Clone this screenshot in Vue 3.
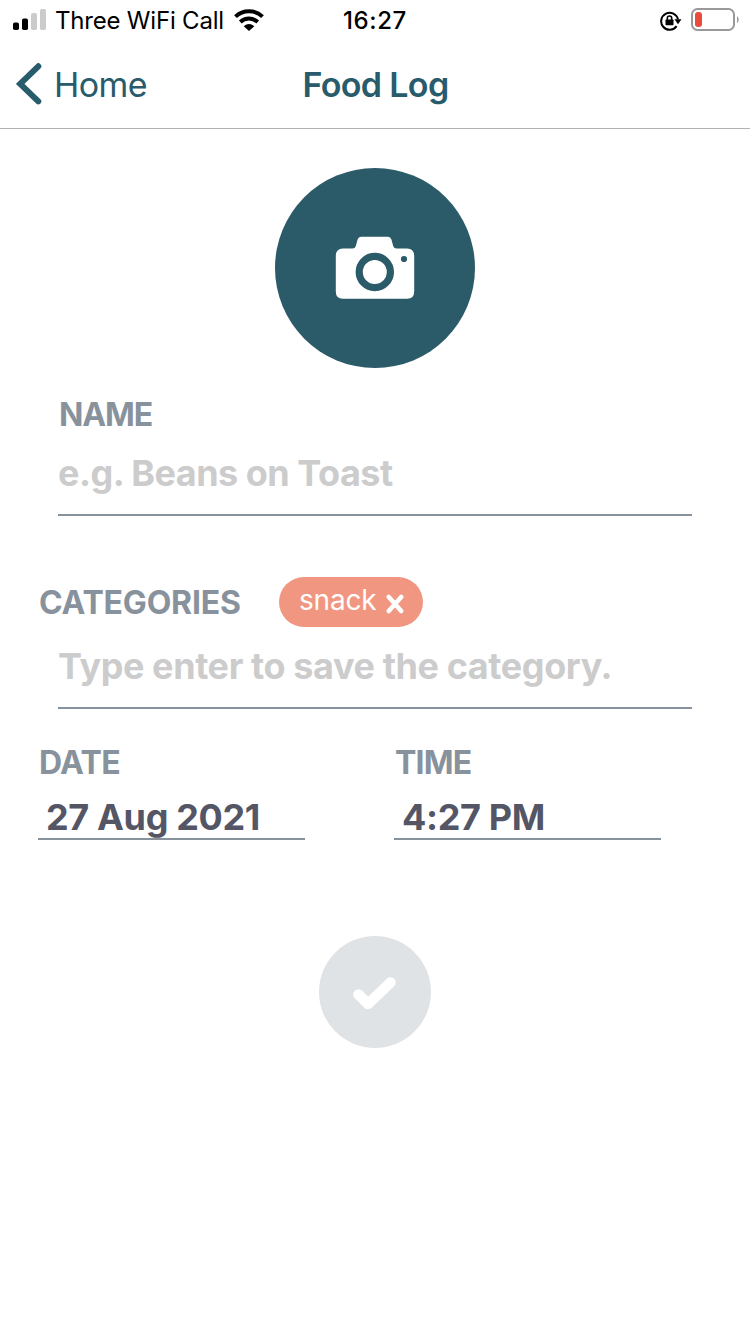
<script setup>
import { ref } from 'vue'

const name = ref('')
const category = ref('')
const categories = ref(['snack'])

function addCategory() {
  const value = category.value.trim()
  if (value) categories.value.push(value)
  category.value = ''
}
function removeCategory(index) {
  categories.value.splice(index, 1)
}
</script>

<template>
  <div class="screen">
    <div class="status">
      <div class="status-left">
        <svg class="signal" width="34" height="22" viewBox="0 0 34 22">
          <rect x="0" y="13.500" width="6" height="7.500" rx="1.800" fill="#000" />
          <rect x="9" y="9.500" width="6" height="11.500" rx="1.800" fill="#000" />
          <rect x="18" y="4" width="6" height="17" rx="1.800" fill="#cbcbcb" />
          <rect x="27" y="0" width="6" height="21" rx="1.800" fill="#cbcbcb" />
        </svg>
        <span class="carrier">Three WiFi Call</span>
        <svg class="wifi" width="30" height="22" viewBox="0 0 30 22">
          <g fill="none" stroke="#000" stroke-width="4">
            <path d="M1.500 7.600C9 .4 21 .4 28.500 7.600" />
            <path d="M6.300 13C11.300 8.400 18.700 8.400 23.700 13" />
          </g>
          <path d="M9.700 17.300Q15 12.800 20.300 17.300L15 22Z" fill="#000" />
        </svg>
      </div>
      <span class="clock">16:27</span>
      <div class="status-right">
        <svg width="22" height="20" viewBox="0 0 22 20">
          <path d="M16.600 15.200A8.500 8.500 0 1 1 18 8.500" fill="none" stroke="#000" stroke-width="2" />
          <path d="M14.500 8.300H21.500L18 13.200Z" fill="#000" />
          <rect x="5.500" y="8.600" width="8" height="5.700" rx=".7" fill="#000" />
          <path d="M7.300 9.500V7.200a2.200 2.200 0 0 1 4.400 0V9.500" fill="none" stroke="#000" stroke-width="1.600" />
        </svg>
        <svg width="48" height="24" viewBox="0 0 48 24">
          <rect x="1" y="1" width="42" height="21" rx="5.500" fill="none" stroke="#999" stroke-width="2" />
          <rect x="4" y="4" width="7" height="15" rx="3" fill="#e94b3c" />
          <path d="M46 8Q47.700 9 47.700 11.500T46 15Z" fill="#999" />
        </svg>
      </div>
    </div>

    <header class="nav">
      <a class="back">
        <svg width="26" height="42" viewBox="0 0 26 42">
          <path d="M22.300 3.300L4.200 20.800L22.300 38.300" fill="none" stroke="#285b6b" stroke-width="6" stroke-linecap="round" stroke-linejoin="miter" />
        </svg>
        <span class="back-text">Home</span>
      </a>
      <h1 class="title">Food Log</h1>
    </header>

    <main class="form">
      <button class="photo" aria-label="Add photo">
        <svg width="80" height="64" viewBox="0 0 80 64">
          <path d="M8 12.500H17.500Q20 12.500 20.800 10L22.600 3.500Q23.500.7 26 .7H53Q55.500.7 56.400 3.500L58.200 10Q59 12.500 61.500 12.500H72Q79.200 12.500 79.200 20V55.500Q79.200 62.800 72 62.800H8Q.800 62.800.800 55.500V20Q.800 12.500 8 12.500Z" fill="#fff" />
          <circle cx="39.800" cy="36" r="15.600" fill="#fff" stroke="#2b5a68" stroke-width="7.200" />
          <circle cx="69" cy="23" r="3.100" fill="#2b5a68" />
        </svg>
      </button>

      <label class="field name-field">
        <span class="label name-label">NAME</span>
        <input v-model="name" class="entry name-entry" placeholder="e.g. Beans on Toast" />
      </label>

      <div class="category-head">
        <span class="label cat-label">CATEGORIES</span>
        <span v-for="(item, i) in categories" :key="item" class="chip">
          <span class="chip-text">{{ item }}</span>
          <svg class="chip-x" width="18" height="20" viewBox="0 0 18 20" @click="removeCategory(i)">
            <path d="M2.800 3L15.200 17M15.200 3L2.800 17" stroke="#fff" stroke-width="4.500" stroke-linecap="round" />
          </svg>
        </span>
      </div>
      <div class="field">
        <input v-model="category" class="entry cat-entry" placeholder="Type enter to save the category." @keyup.enter="addCategory" />
      </div>

      <div class="when">
        <div class="when-item">
          <span class="label date-label">DATE</span>
          <div class="value date-value">27 Aug 2021</div>
        </div>
        <div class="when-item">
          <span class="label time-label">TIME</span>
          <div class="value time-value">4:27 PM</div>
        </div>
      </div>

      <button class="save" aria-label="Save">
        <svg width="44" height="36" viewBox="0 0 44 36">
          <path d="M5.500 20.500L15 30L37.500 8.500" fill="none" stroke="#fff" stroke-width="10.500" stroke-linecap="round" stroke-linejoin="round" />
        </svg>
      </button>
    </main>
  </div>
</template>

<style>
body {
  background: #fff;
}
</style>

<style scoped>
.screen {
  box-sizing: border-box;
  width: 750px;
  height: 1334px;
  overflow: hidden;
  background: #fff;
  font-family: Inter, "Liberation Sans", sans-serif;
  white-space: nowrap;
}
svg {
  display: block;
  flex: none;
}
button {
  display: flex;
  align-items: center;
  justify-content: center;
  padding: 0;
  border: 0;
  border-radius: 50%;
}
.status {
  display: grid;
  grid-template-columns: 1fr auto 1fr;
  height: 40px;
  color: #000;
  font-size: 24px;
  line-height: 41px;
}
.status-left {
  display: flex;
  padding-left: 13px;
}
.signal {
  margin-top: 9px;
}
.carrier {
  width: 179px;
  margin-left: 8px;
  letter-spacing: -0.2px;
}
.wifi {
  margin-top: 9px;
}
.clock {
  font-weight: 500;
  letter-spacing: 0.6px;
}
.status-right {
  display: flex;
  justify-content: flex-end;
  gap: 9px;
  padding: 8px 11px 0 0;
}
.status-right svg:first-child {
  margin-top: 3px;
}
.nav {
  display: grid;
  grid-template-columns: 1fr auto 1fr;
  height: 88px;
  border-bottom: 1px solid #b2b2b2;
  color: #285b6b;
  font-size: 34px;
  line-height: 88px;
}
.back {
  display: flex;
  align-items: flex-start;
  height: 88px;
  padding-left: 16px;
}
.back svg {
  margin-top: 23px;
}
.back-text {
  margin-left: 12px;
  letter-spacing: -0.6px;
  line-height: 89px;
}
.title {
  margin: 0;
  padding-left: 1px;
  font-size: 34px;
  font-weight: 600;
  letter-spacing: -0.65px;
  line-height: 89px;
}
.form {
  display: flex;
  flex-direction: column;
  padding: 39px 38px 0;
}
.photo {
  align-self: center;
  width: 200px;
  height: 200px;
  background: #2b5a68;
}
.label {
  padding-left: 1px;
  color: #87929d;
  font-size: 32px;
  font-weight: 700;
  line-height: 41px;
  letter-spacing: -0.65px;
}
.name-label {
  letter-spacing: -1.1px;
}
.time-label {
  letter-spacing: -0.8px;
}
.field {
  display: flex;
  flex-direction: column;
  margin: 0 20px;
}
.name-field {
  margin-top: 26px;
}
.entry {
  box-sizing: border-box;
  width: 100%;
  height: 81px;
  padding: 0 0 3px;
  border: 0;
  border-bottom: 2px solid #87929d;
  outline: none;
  background: transparent;
  font-family: inherit;
  font-size: 36px;
  font-weight: 700;
}
.entry::placeholder {
  color: #ccc;
  opacity: 1;
}
.name-entry {
  letter-spacing: -0.5px;
}
.cat-entry {
  height: 82px;
  padding-bottom: 2px;
  letter-spacing: -0.4px;
}
.category-head {
  display: flex;
  align-items: flex-start;
  height: 50px;
  margin-top: 61px;
}
.cat-label {
  width: 240px;
  margin-top: 5px;
  letter-spacing: -0.2px;
}
.chip {
  box-sizing: border-box;
  display: flex;
  width: 144px;
  height: 50px;
  padding-left: 20px;
  border-radius: 25px;
  background: #f19680;
  color: #fff;
  font-size: 28px;
  line-height: 46px;
}
.chip-text {
  width: 87px;
  letter-spacing: -0.2px;
}
.chip-x {
  margin-top: 17px;
}
.when {
  display: grid;
  grid-template-columns: 267px 267px;
  column-gap: 89px;
  margin-top: 33px;
}
.when-item {
  display: flex;
  flex-direction: column;
}
.value {
  height: 55px;
  padding-left: 8px;
  border-bottom: 2px solid #87929d;
  color: #545666;
  font-size: 36px;
  font-weight: 700;
  line-height: 68px;
  letter-spacing: -0.35px;
}
.save {
  align-self: center;
  width: 112px;
  height: 112px;
  margin-top: 96px;
  background: #dfe3e6;
}
</style>
